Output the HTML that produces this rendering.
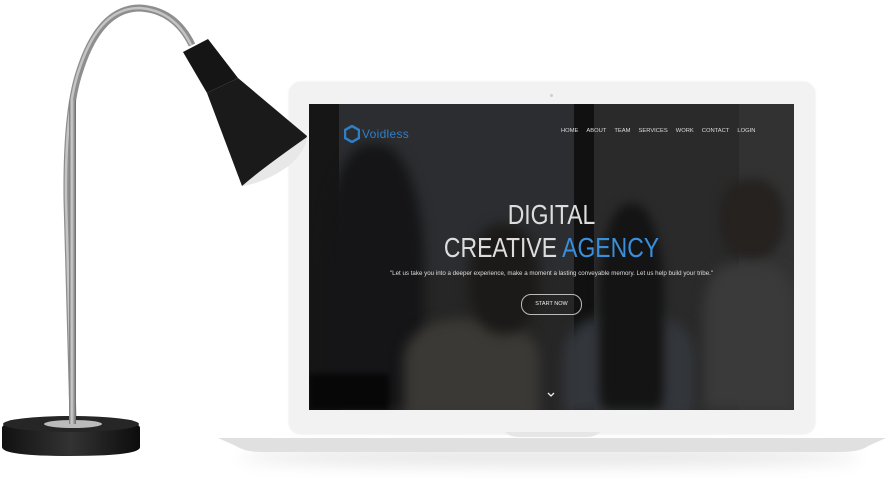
<!DOCTYPE html>
<html><head><style>
html,body{margin:0;padding:0;background:#fff;width:892px;height:478px;overflow:hidden;font-family:"Liberation Sans",sans-serif}
.abs{position:absolute}
</style></head><body>
<div class="abs" style="left:0;top:0;width:892px;height:478px">
<div class="abs" style="left:240px;top:448px;width:620px;height:18px;border-radius:50%;background:rgba(0,0,0,0.10);filter:blur(8px)"></div>
<div class="abs" style="left:289px;top:82px;width:526px;height:352px;background:#f2f2f2;border-radius:12px;box-shadow:0 0 2px #e4e4e4"></div>
<div class="abs" style="left:550px;top:94px;width:3px;height:3px;background:#ccc;border-radius:50%"></div>
<svg class="abs" style="left:0;top:0" width="892" height="478">
<path d="M218 438 L886 438 L868 446 Q860 452 840 452 L262 452 Q245 452 236 446 Z" fill="#e0e0e0"/>
<path d="M505 432 L600 432 Q596 437 585 437 L520 437 Q509 437 505 432Z" fill="#e6e6e6"/>
</svg>
<div class="abs" style="left:309px;top:104px;width:485px;height:306px;background:#262626;overflow:hidden">
 <div class="abs" style="left:0;top:0;width:30px;height:306px;background:#161616"></div>
 <div class="abs" style="left:30px;top:0;width:235px;height:170px;background:#2b2d30"></div>
 <div class="abs" style="left:265px;top:0;width:20px;height:306px;background:#111"></div>
 <div class="abs" style="left:285px;top:0;width:200px;height:306px;background:#2a2a2a"></div>
 <div class="abs" style="left:430px;top:0;width:55px;height:306px;background:#323232"></div>
 <div class="abs" style="left:15px;top:40px;width:100px;height:266px;background:#151517;border-radius:45% 45% 10% 10%;filter:blur(6px)"></div>
 <div class="abs" style="left:95px;top:215px;width:135px;height:100px;background:#3b3935;border-radius:40% 40% 0 0;filter:blur(6px)"></div>
 <div class="abs" style="left:160px;top:120px;width:70px;height:110px;background:#1c1a18;border-radius:45%;filter:blur(6px)"></div>
 <div class="abs" style="left:255px;top:210px;width:130px;height:100px;background:#33373c;border-radius:40% 40% 0 0;filter:blur(6px)"></div>
 <div class="abs" style="left:290px;top:100px;width:65px;height:206px;background:#141414;border-radius:45% 45% 10% 10%;filter:blur(5px)"></div>
 <div class="abs" style="left:410px;top:75px;width:65px;height:80px;background:#252220;border-radius:45%;filter:blur(5px)"></div>
 <div class="abs" style="left:395px;top:160px;width:90px;height:146px;background:#3a3a3a;border-radius:30% 30% 0 0;filter:blur(6px)"></div>
 <div class="abs" style="left:0;top:270px;width:80px;height:36px;background:#070707;filter:blur(3px)"></div>
 <svg class="abs" style="left:35px;top:21px" width="16" height="18"><path d="M8 1 L15 5 L15 13 L8 17 L1 13 L1 5Z" fill="none" stroke="#2f7fc8" stroke-width="2.5"/></svg>
 <div class="abs" style="left:53px;top:23px;font-size:12px;color:#2f7fc8;letter-spacing:0.3px">Voidless</div>
 <div class="abs" style="left:252px;top:24px;font-size:5.8px;color:#ddd;white-space:nowrap">
  <span style="margin-right:8px">HOME</span><span style="margin-right:8px">ABOUT</span><span style="margin-right:8px">TEAM</span><span style="margin-right:8px">SERVICES</span><span style="margin-right:8px">WORK</span><span style="margin-right:8px">CONTACT</span><span>LOGIN</span></div>
 <div class="abs" style="left:0;top:96px;width:485px;text-align:center;font-size:28px;color:#ddd;line-height:30px;transform:scaleX(0.82)">DIGITAL</div>
 <div class="abs" style="left:0;top:129px;width:485px;text-align:center;font-size:28px;color:#ddd;line-height:30px;transform:scaleX(0.82)">CREATIVE <span style="color:#3a8fdc">AGENCY</span></div>
 <div class="abs" style="left:0;top:166px;width:485px;text-align:center;font-size:6.2px;color:#ddd">"Let us take you into a deeper experience, make a moment a lasting conveyable memory. Let us help build your tribe."</div>
 <div class="abs" style="left:212px;top:190px;width:59px;height:19px;border:1px solid #bbb;border-radius:10px;font-size:5.5px;color:#eee;text-align:center;line-height:19px">START NOW</div>
 <svg class="abs" style="left:238px;top:288px" width="8" height="6"><path d="M1 1 L4 4 L7 1" stroke="#eee" stroke-width="1.3" fill="none"/></svg>
</div>
<svg class="abs" style="left:0;top:0" width="320" height="478">
<defs>
<linearGradient id="st" x1="0" x2="1"><stop offset="0" stop-color="#777"/><stop offset=".4" stop-color="#d0d0d0"/><stop offset="1" stop-color="#666"/></linearGradient>
<linearGradient id="bs" x1="0" x2="1"><stop offset="0" stop-color="#111"/><stop offset=".5" stop-color="#333"/><stop offset="1" stop-color="#0c0c0c"/></linearGradient>
</defs>
<path d="M73 420 L67 200 Q66 110 80 70 Q100 8 140 8 Q175 10 192 45" fill="none" stroke="#8e8e8e" stroke-width="7"/>
<path d="M72 420 L66 200 Q65 110 79 70 Q99 8 139 8 Q174 10 191 45" fill="none" stroke="#c4c4c4" stroke-width="2.5"/>
<path d="M2 428 Q2 418 70 416 Q140 418 140 428 L140 447 Q140 456 70 456 Q2 456 2 447Z" fill="url(#bs)"/>
<ellipse cx="71" cy="424" rx="68" ry="8" fill="#262626"/>
<ellipse cx="73" cy="424" rx="29" ry="4" fill="#bbb"/>
<rect x="69" y="100" width="7" height="324" fill="url(#st)"/>
<path d="M183 52 L208 39 L238 78 L207 93Z" fill="#151515"/>
<path d="M207 93 L238 78 L307 136 Q300 160 242 186 Z" fill="#1a1a1a"/>
<path d="M242 186 Q260 170 307 137 Q306 150 290 165 Q265 183 242 186Z" fill="#e8e8e8"/>
</svg>
</div>
</body></html>
